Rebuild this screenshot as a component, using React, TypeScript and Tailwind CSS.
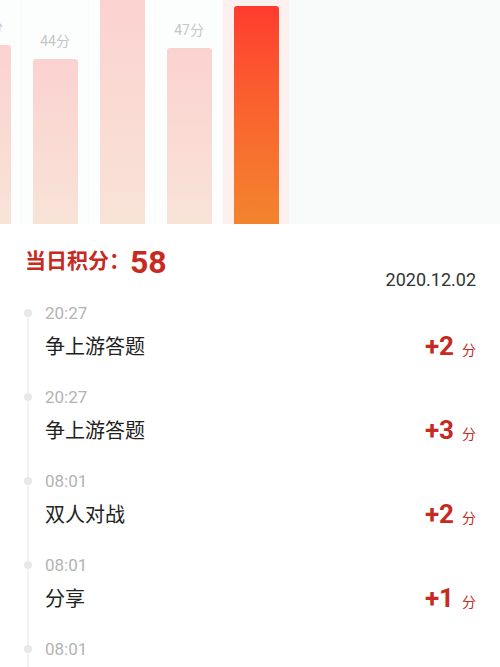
import React from 'react';

const bars = [
  { score: 45, h: 179 },
  { score: 44, h: 165 },
  { score: 52, h: 228 },
  { score: 47, h: 176 },
  { score: 58, h: 218, active: true },
];

const records = [
  { time: '20:27', title: '争上游答题', pts: 2 },
  { time: '20:27', title: '争上游答题', pts: 3 },
  { time: '08:01', title: '双人对战', pts: 2 },
  { time: '08:01', title: '分享', pts: 1 },
  { time: '08:01', title: '登录', pts: 1 },
];

const font = { fontFamily: '"Roboto","Noto Sans CJK SC",sans-serif' };

function Bar({ score, h, active }: { score: number; h: number; active?: boolean }) {
  return (
    <div
      className={`w-[66px] h-full shrink-0 flex flex-col items-center justify-end ${
        active ? 'bg-[#fdf1ef]' : 'bg-[#fcfdfd]'
      }`}
    >
      <span className="text-[14px] leading-[20px] text-[#c6c6c6] mb-[8px] whitespace-nowrap">{score}分</span>
      <div
        className={`w-[45px] shrink-0 rounded-t-[3px] ${
          active
            ? 'bg-gradient-to-b from-[#ff3a2f] to-[#f2842e]'
            : 'bg-gradient-to-b from-[#fbd2d0] to-[#f8e3d7]'
        }`}
        style={{ height: h }}
      />
    </div>
  );
}

export default function App() {
  return (
    <div className="w-[500px] h-[667px] overflow-hidden bg-white" style={font}>
      <div className="h-[224px] bg-[#f8fafa] overflow-hidden flex items-end gap-px -ml-[45px]">
        {bars.map((b, i) => (
          <Bar key={i} {...b} />
        ))}
      </div>

      <div className="flex justify-between items-start pt-[18px] pl-[25px] pr-[24px]">
        <div className="flex items-center h-[40px] text-[#c62a22]">
          <span className="text-[21px] font-bold">当日积分：</span>
          <span className="text-[32px] font-bold leading-none">58</span>
        </div>
        <span className="pt-[28px] text-[18px] leading-[20px] text-[#333]">2020.12.02</span>
      </div>

      <div className="mt-[11px] relative">
        <div className="absolute left-[27px] top-[12px] bottom-0 w-[2px] bg-[#f2f2f2]" />
        {records.map((r, i) => (
          <div key={i} className="relative h-[84px] pl-[45px] pr-[24px]">
            <div className="absolute left-[24px] top-[8px] w-[8px] h-[8px] rounded-full bg-[#e8e8e8]" />
            <div className="text-[17px] leading-[24px] text-[#b3b3b3]">{r.time}</div>
            <div className="mt-[7px] h-[30px] flex items-center justify-between">
              <span className="text-[20px] text-[#222]">{r.title}</span>
              <span className="flex items-baseline text-[#c62a22]">
                <span className="text-[26px] font-bold leading-none">+{r.pts}</span>
                <span className="text-[14px] ml-[8px]">分</span>
              </span>
            </div>
          </div>
        ))}
      </div>
    </div>
  );
}
